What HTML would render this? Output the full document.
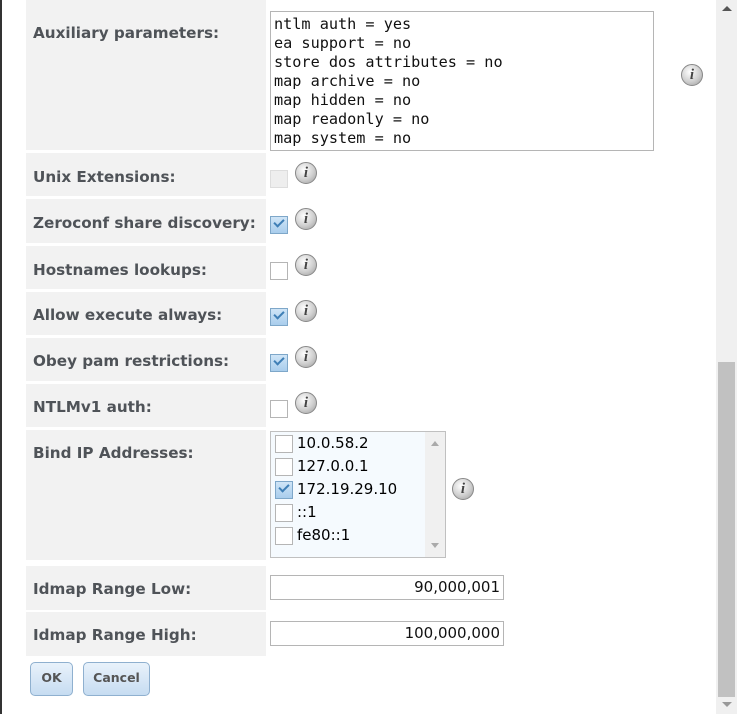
<!DOCTYPE html>
<html><head><style>
body{margin:0;width:737px;height:714px;background:#fff;position:relative;overflow:hidden;font-family:"DejaVu Sans",Verdana,sans-serif}
.lb{position:absolute;left:26px;width:240px;background:#f2f2f2;}
.lb span{position:absolute;left:7px;font-weight:bold;font-size:15.2px;color:#4f5358;white-space:nowrap;margin-top:1px}
.cb{position:absolute;left:270px;width:16px;height:16px;border:1px solid #b5b5b5;background:#fff;box-sizing:content-box}
.cb.on{background:linear-gradient(#cfe5f7,#a9cdec);border-color:#7ea7c9}
.cb.on::after{content:"";position:absolute;left:3px;top:2px;width:8px;height:4px;border-left:2px solid #3f7fb6;border-bottom:2px solid #3f7fb6;transform:rotate(-45deg)}
.cb.dis{background:#eee;border-color:#ddd}
.i{position:absolute;width:20px;height:20px;border-radius:50%;background:radial-gradient(circle at 40% 35%,#fff,#cfcfcf 55%,#9a9a9a);border:1px solid #888;font:italic bold 15px "Liberation Serif",serif;color:#444;text-align:center;line-height:20px}
.ta{position:absolute;left:270px;top:11px;width:384px;height:140px;border:1px solid #b5b5b5;font-family:"DejaVu Sans Mono",monospace;font-size:15.2px;line-height:19px;padding:3px 0 0 3px;box-sizing:border-box;color:#111;white-space:pre}
.inp{position:absolute;left:270px;width:234px;height:25px;border:1px solid #b5b5b5;box-sizing:border-box;text-align:right;font-size:15px;line-height:23px;padding-right:3px;color:#111}
.btn{position:absolute;top:662px;height:34px;border:1px solid #8fb0cf;border-radius:5px;background:linear-gradient(#e9f2fb,#c6dcf1);box-sizing:border-box;font-weight:bold;font-size:12.5px;color:#555;text-align:center;line-height:30px}
.ip{position:absolute;left:297px;font-size:15px}
</style></head><body>
<div style="position:absolute;left:0;top:0;width:2px;height:714px;background:#333"></div>
<div class="lb" style="top:0;height:150px"><span style="top:23px">Auxiliary parameters:</span></div>
<div class="ta">ntlm auth = yes
ea support = no
store dos attributes = no
map archive = no
map hidden = no
map readonly = no
map system = no</div>
<div class="i" style="left:681px;top:64px">i</div>

<div class="lb" style="top:153px;height:43px"><span style="top:14px">Unix Extensions:</span></div>
<div class="cb dis" style="top:170px"></div><div class="i" style="left:295px;top:162px">i</div>
<div class="lb" style="top:199px;height:44px"><span style="top:14px">Zeroconf share discovery:</span></div>
<div class="cb on" style="top:216px"></div><div class="i" style="left:295px;top:208px">i</div>
<div class="lb" style="top:246px;height:43px"><span style="top:14px">Hostnames lookups:</span></div>
<div class="cb" style="top:262px"></div><div class="i" style="left:295px;top:254px">i</div>
<div class="lb" style="top:292px;height:43px"><span style="top:13px">Allow execute always:</span></div>
<div class="cb on" style="top:308px"></div><div class="i" style="left:295px;top:300px">i</div>
<div class="lb" style="top:338px;height:43px"><span style="top:13px">Obey pam restrictions:</span></div>
<div class="cb on" style="top:354px"></div><div class="i" style="left:295px;top:346px">i</div>
<div class="lb" style="top:384px;height:43px"><span style="top:13px">NTLMv1 auth:</span></div>
<div class="cb" style="top:400px"></div><div class="i" style="left:295px;top:392px">i</div>
<div class="lb" style="top:430px;height:130px"><span style="top:13px">Bind IP Addresses:</span></div>
<div style="position:absolute;left:270px;top:431px;width:176px;height:127px;border:1px solid #c0c0c0;background:#f5fafe;box-sizing:border-box">
 <div style="position:absolute;right:0;top:0;width:20px;height:125px;background:#f0f0f0"></div>
 <div style="position:absolute;right:6px;top:9px;border:4px solid transparent;border-bottom:5px solid #aaa;border-top:0"></div>
 <div style="position:absolute;right:6px;bottom:9px;border:4px solid transparent;border-top:5px solid #aaa;border-bottom:0"></div>
</div>
<div class="cb" style="top:435px;left:275px"></div><div class="ip" style="top:434px">10.0.58.2</div>
<div class="cb" style="top:458px;left:275px"></div><div class="ip" style="top:457px">127.0.0.1</div>
<div class="cb on" style="top:481px;left:275px"></div><div class="ip" style="top:480px">172.19.29.10</div>
<div class="cb" style="top:504px;left:275px"></div><div class="ip" style="top:503px">::1</div>
<div class="cb" style="top:527px;left:275px"></div><div class="ip" style="top:526px">fe80::1</div>
<div class="i" style="left:452px;top:478px">i</div>

<div class="lb" style="top:566px;height:44px"><span style="top:13px">Idmap Range Low:</span></div>
<div class="inp" style="top:575px">90,000,001</div>
<div class="lb" style="top:612px;height:44px"><span style="top:13px">Idmap Range High:</span></div>
<div class="inp" style="top:621px">100,000,000</div>
<div class="btn" style="left:30px;width:43px">OK</div>
<div class="btn" style="left:83px;width:67px">Cancel</div>

<div style="position:absolute;left:716px;top:0;width:21px;height:714px;background:#f0f0f0"></div>
<div style="position:absolute;left:722px;top:6px;border:5px solid transparent;border-bottom:5px solid #555;border-top:0"></div>
<div style="position:absolute;left:718px;top:362px;width:17px;height:335px;background:#c1c1c1"></div>
<div style="position:absolute;left:722px;top:702px;border:5px solid transparent;border-top:5px solid #999;border-bottom:0"></div>
</body></html>
